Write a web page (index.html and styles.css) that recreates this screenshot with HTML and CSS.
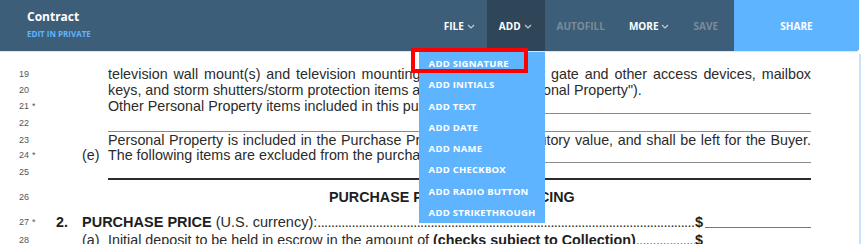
FILE: index.html
```html
<!DOCTYPE html>
<html>

<head>
    <title>
        Contract
    </title>
    <link rel="stylesheet" href="styles.css">
</head>

<body>
    <div class="topbar">
        <div class="doc-title">
            <div class="title">Contract</div>
            <div class="subtitle">EDIT IN PRIVATE</div>
        </div>
        <div class="menu">
            <div class="menu-item">FILE
                <svg class="chevron" viewBox="0 0 8 5"><polyline points="1,1 4,4 7,1"></polyline></svg>
            </div>
            <div class="menu-item active">ADD
                <svg class="chevron" viewBox="0 0 8 5"><polyline points="1,1 4,4 7,1"></polyline></svg>
                <div class="dropdown">
                    <div class="highlight"></div>
                    <div class="dropdown-item">ADD SIGNATURE</div>
                    <div class="dropdown-item">ADD INITIALS</div>
                    <div class="dropdown-item">ADD TEXT</div>
                    <div class="dropdown-item">ADD DATE</div>
                    <div class="dropdown-item">ADD NAME</div>
                    <div class="dropdown-item">ADD CHECKBOX</div>
                    <div class="dropdown-item">ADD RADIO BUTTON</div>
                    <div class="dropdown-item">ADD STRIKETHROUGH</div>
                </div>
            </div>
            <div class="menu-item disabled">AUTOFILL</div>
            <div class="menu-item">MORE
                <svg class="chevron" viewBox="0 0 8 5"><polyline points="1,1 4,4 7,1"></polyline></svg>
            </div>
            <div class="menu-item disabled">SAVE</div>
        </div>
        <div class="share">SHARE</div>
    </div>

    <div class="workspace">
        <div class="document">
            <div class="row r16">
                <div class="ln">19</div><div></div><div></div>
                <div class="txt full">television wall mount(s) and television mounting hardware, security gate and other access devices, mailbox</div>
            </div>
            <div class="row r16">
                <div class="ln">20</div><div></div><div></div>
                <div class="txt">keys, and storm shutters/storm protection items and hardware ("Personal Property").</div>
            </div>
            <div class="row r16">
                <div class="ln">21<span class="star">*</span></div><div></div><div></div>
                <div class="txt fill">Other Personal Property items included in this purchase are:<span class="blank"></span></div>
            </div>
            <div class="row r18">
                <div class="ln">22</div><div></div><div></div>
                <div class="txt ruled"></div>
            </div>
            <div class="row r15">
                <div class="ln">23</div><div></div><div></div>
                <div class="txt full">Personal Property is included in the Purchase Price, has no contributory value, and shall be left for the Buyer.</div>
            </div>
            <div class="row r16">
                <div class="ln">24<span class="star">*</span></div><div></div>
                <div class="mark">(e)</div>
                <div class="txt fill">The following items are excluded from the purchase:<span class="blank"></span></div>
            </div>
            <div class="row r18">
                <div class="ln">25</div><div></div><div></div>
                <div class="txt ruled heavy"></div>
            </div>
            <div class="row r32">
                <div class="ln">26</div><div></div><div></div>
                <div class="txt heading">PURCHASE PRICE AND FINANCING</div>
            </div>
            <div class="row r18">
                <div class="ln">27<span class="star">*</span></div>
                <div class="mark bold">2.</div>
                <div class="txt fill wide"><b>PURCHASE PRICE</b>&nbsp;(U.S. currency):<span class="leader">..........................................................................................................................................</span><b>$</b><span class="blank amount"></span></div>
            </div>
            <div class="row r18">
                <div class="ln">28</div><div></div>
                <div class="mark">(a)</div>
                <div class="txt fill">Initial deposit to be held in escrow in the amount of <b>&nbsp;(checks subject to Collection)</b><span class="leader">..............................................................................</span><b>$</b><span class="blank amount"></span></div>
            </div>
        </div>
        <div class="gutter"></div>
    </div>
</body>
</html>
```

FILE: styles.css
```css
body {
    margin: 0;
    width: 868px;
    height: 244px;
    overflow: hidden;
    background-color: white;
    font-family: "Liberation Sans", Arial, sans-serif;
}

/* top bar */
.topbar {
    position: relative;
    z-index: 2;
    display: flex;
    width: 859px;
    height: 51px;
    background-color: #3d5e78;
    border-bottom-right-radius: 4px;
    box-shadow: 0 1px 1px rgba(0, 0, 0, 0.12);
    font-family: "Open Sans", sans-serif;
    font-weight: 700;
}

.doc-title {
    padding: 8px 0 0 27px;
}

.title {
    color: white;
    font-size: 12px;
    line-height: 18px;
}

.subtitle {
    margin-top: 3px;
    color: #5fb4ff;
    font-size: 8px;
    line-height: 10px;
}

.menu {
    display: flex;
    margin-left: auto;
}

.menu-item {
    position: relative;
    display: flex;
    align-items: center;
    padding: 0 12px;
    color: white;
    font-size: 10px;
    padding-top: 1px;
}

.menu-item.active {
    background-color: #2f4558;
    padding-right: 13px;
}

.menu-item.disabled {
    color: #7c8b99;
}

.chevron {
    width: 8px;
    height: 5px;
    margin-left: 3px;
    fill: none;
    stroke: #c3ccd5;
    stroke-width: 1.2;
}

.share {
    display: flex;
    align-items: center;
    justify-content: center;
    width: 125px;
    margin-left: 4px;
    padding-top: 1px;
    background-color: #5fb4ff;
    border-bottom-right-radius: 4px;
    color: white;
    font-size: 10px;
}

/* add menu */
.dropdown {
    position: absolute;
    top: 52px;
    right: 0;
    width: 126px;
    padding-top: 1px;
    background-color: #5fb4ff;
}

.dropdown-item {
    display: flex;
    align-items: center;
    height: 21.25px;
    padding-left: 10px;
    color: white;
    font-size: 9.5px;
    letter-spacing: 0.25px;
    white-space: nowrap;
}

.highlight {
    position: absolute;
    left: -8px;
    top: -4px;
    width: 117px;
    height: 25px;
    box-sizing: border-box;
    border: 4px solid #ff0000;
}

/* document */
.workspace {
    display: flex;
}

.document {
    flex: 1;
    min-width: 0;
    padding: 15px 48px 0 19px;
    color: #2b2b2b;
    font-size: 14.3px;
}

.row {
    display: grid;
    grid-template-columns: 37px 26px 26px minmax(0, 1fr);
    align-items: center;
}

.r15 { height: 15px; }
.r16 { height: 16px; }
.r18 { height: 18px; }
.r32 { height: 32px; }

.ln {
    color: #555;
    font-size: 9px;
}

.star {
    margin-left: 3px;
    font-size: 9px;
}

.mark {
    white-space: nowrap;
}

.bold,
b {
    font-weight: 700;
    color: #1e1e1e;
}

.txt {
    min-width: 0;
    overflow: hidden;
    white-space: nowrap;
}

.txt.full {
    text-align: justify;
    text-align-last: justify;
    white-space: normal;
    height: 16px;
}

.txt.fill {
    display: flex;
    align-items: baseline;
}

.txt.wide {
    grid-column: 3 / 5;
    font-size: 14.5px;
}

.blank {
    flex: 1;
    align-self: flex-end;
    height: 1px;
    margin-bottom: 0;
    background-color: #8a8a8a;
}

.blank.amount {
    flex: 0 0 106px;
    margin-left: 2px;
    margin-bottom: 2px;
    background-color: #777;
}

.leader {
    flex: 1;
    min-width: 0;
    overflow: hidden;
    letter-spacing: -0.6px;
}

.ruled {
    align-self: end;
    height: 0;
    border-bottom: 1px solid #8a8a8a;
}

.ruled.heavy {
    margin-bottom: 1px;
    border-bottom: 2px solid #2b2b2b;
}

.heading {
    padding-left: 221px;
    font-weight: 700;
    color: #1e1e1e;
}

.gutter {
    width: 7px;
    margin-top: 3px;
    height: 200px;
    border-left: 2px solid #c5e2ff;
}
```
